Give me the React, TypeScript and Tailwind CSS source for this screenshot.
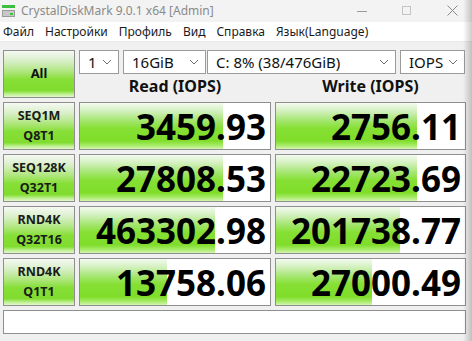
import React from "react";

const barBg =
  "linear-gradient(to bottom, #f4faf0 0%, #d2f0bc 18%, #a4e670 38%, #86e034 55%, #7fdd2a 82%, #a6ea66 92%, #d4f6b0 100%)";
const labelBg =
  "linear-gradient(to bottom, #f6f9f4 0%, #d8efc8 22%, #aee67c 45%, #86df36 62%, #80dc2e 86%, #b8ee86 93%, #e2f8cc 100%)";

const Chevron = () => (
  <svg width="10" height="6" viewBox="0 0 10 6" className="shrink-0">
    <path d="M1 1 L5 5 L9 1" fill="none" stroke="#707070" strokeWidth="1" />
  </svg>
);

function Select({ w, text }: { w: string; text: string }) {
  return (
    <div
      className={`${w} h-[24px] bg-white border border-[#9a9a9a] flex items-center justify-between pl-[8px] pr-[6px] text-[15px] text-[#111] leading-none`}
    >
      <span>{text}</span>
      <Chevron />
    </div>
  );
}

function ValueCell({ w, value, pct }: { w: string; value: string; pct: number }) {
  return (
    <div className={`${w} h-[48px] border border-[#8f8f8f] bg-white relative overflow-hidden`}>
      <div className="absolute left-0 top-0 bottom-0" style={{ width: `${pct}%`, background: barBg }} />
      <div className="relative h-full flex items-center justify-end pr-[4px] text-[35px] font-bold text-black leading-none">
        {value}
      </div>
    </div>
  );
}

function LabelCell({ a, b }: { a: string; b: string }) {
  return (
    <div
      className="w-[72px] h-[48px] border border-[#8f8f8f] flex flex-col items-center justify-center text-[12.5px] font-bold text-[#1a1a1a] leading-[20px]"
      style={{ background: labelBg }}
    >
      <span>{a}</span>
      <span>{b}</span>
    </div>
  );
}

const rows = [
  { a: "SEQ1M", b: "Q8T1", r: "3459.93", rp: 75.5, w: "2756.11", wp: 74.5 },
  { a: "SEQ128K", b: "Q32T1", r: "27808.53", rp: 75.5, w: "22723.69", wp: 74.5 },
  { a: "RND4K", b: "Q32T16", r: "463302.98", rp: 71, w: "201738.77", wp: 65.5 },
  { a: "RND4K", b: "Q1T1", r: "13758.06", rp: 46, w: "27000.49", wp: 51 },
];

export default function App() {
  return (
    <div
      className="w-[472px] h-[341px] relative overflow-hidden bg-[#f0f0f0] flex flex-col"
      style={{ fontFamily: '"Noto Sans", "Open Sans", sans-serif' }}
    >
      {/* title bar */}
      <div className="h-[22px] bg-[#f3f3f3] flex items-center relative shrink-0">
        <svg width="14" height="13" viewBox="0 0 14 13" className="ml-[2px]">
          <rect x="0" y="0" width="13" height="3" fill="#3cbf3c" />
          <rect x="0" y="5" width="13" height="7" fill="#9a9a9a" />
          <rect x="1" y="6" width="11" height="5" fill="#c8c8c8" />
          <rect x="8" y="8" width="3" height="2" fill="#3cc83c" />
        </svg>
        <span className="ml-[5px] text-[12px] text-[#8a8a8a] leading-none">
          CrystalDiskMark 9.0.1 x64 [Admin]
        </span>
        <div className="absolute left-[357px] top-[11px] w-[10px] h-px bg-[#9a9a9a]" />
        <div className="absolute left-[402px] top-[6px] w-[9px] h-[9px] border border-[#c4c4c4]" />
        <svg className="absolute left-[447px] top-[5px]" width="11" height="11" viewBox="0 0 11 11">
          <path d="M0.5 0.5 L10.5 10.5 M10.5 0.5 L0.5 10.5" stroke="#8a8a8a" strokeWidth="1" />
        </svg>
      </div>
      {/* menu */}
      <div className="h-[20px] bg-white flex items-center pl-[3px] gap-[11px] text-[12px] text-[#1a1a1a] leading-none shrink-0 border-b border-[#e8e8e8]">
        <span>Файл</span>
        <span>Настройки</span>
        <span>Профиль</span>
        <span>Вид</span>
        <span>Справка</span>
        <span>Язык(Language)</span>
      </div>
      {/* main */}
      <div className="flex flex-col pl-[3px] pt-[8px] gap-[4px]">
        <div className="flex gap-[4px]">
          <div
            className="w-[72px] h-[48px] border border-[#8f8f8f] flex items-center justify-center text-[13px] font-bold text-[#111]"
            style={{ background: labelBg }}
          >
            All
          </div>
          <div className="flex flex-col">
            <div className="flex">
              <Select w="w-[40px]" text="1" />
              <div className="w-[4px]" />
              <Select w="w-[83px]" text="16GiB" />
              <div className="w-[1px]" />
              <Select w="w-[189px]" text="C: 8% (38/476GiB)" />
              <div className="w-[4px]" />
              <Select w="w-[65px]" text="IOPS" />
            </div>
            <div className="flex h-[24px] items-center text-[16px] font-bold text-[#111] leading-none">
              <div className="w-[192px] text-center">Read (IOPS)</div>
              <div className="w-[4px]" />
              <div className="w-[191px] text-center">Write (IOPS)</div>
            </div>
          </div>
        </div>
        {rows.map((r, i) => (
          <div key={i} className="flex gap-[4px]">
            <LabelCell a={r.a} b={r.b} />
            <ValueCell w="w-[192px]" value={r.r} pct={r.rp} />
            <ValueCell w="w-[191px]" value={r.w} pct={r.wp} />
          </div>
        ))}
        <div className="w-[463px] h-[24px] bg-white border border-[#8f8f8f]" />
      </div>
      {/* window shadow on right edge */}
      <div
        className="absolute right-0 top-0 bottom-0 w-[9px] pointer-events-none"
        style={{ background: "linear-gradient(to right, rgba(0,0,0,0), rgba(0,0,0,0.2))" }}
      />
    </div>
  );
}
